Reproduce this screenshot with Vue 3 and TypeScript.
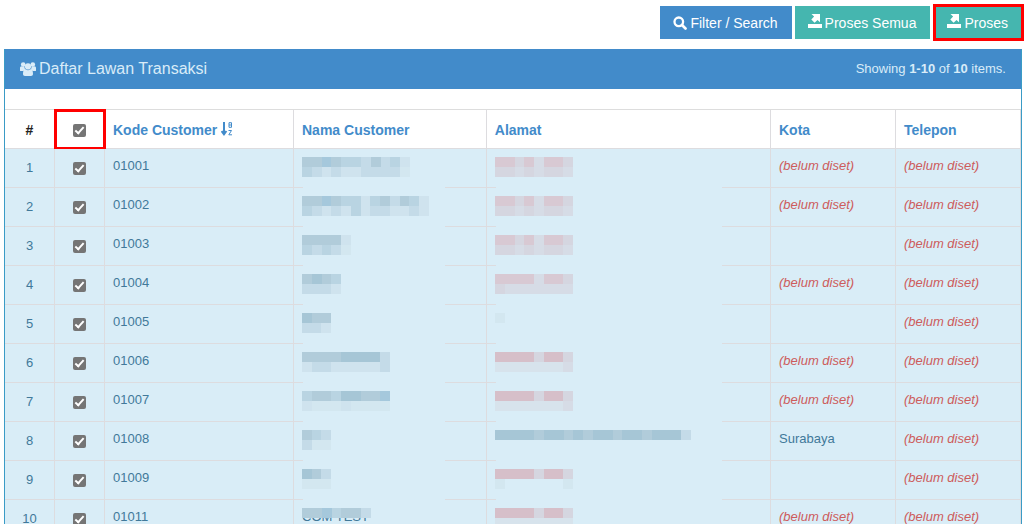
<script setup lang="ts">
interface Row {
  code: string
  name: string[]
  address: string[]
  label?: string
  city: string | null
}

const tones: Record<string, string> = {
  '.': 'transparent',
  a: '#a6c6d6',
  b: '#b1ccda',
  c: '#b9d4e2',
  d: '#c4dbe8',
  e: '#cfe3ee',
  f: '#d3e7f0',
  k: '#a5c8dc',
  p: '#d8c9d3',
  q: '#d6bfc9',
  r: '#d5d6e0',
  s: '#d6dce6',
  t: '#d7e3ec',
}

const unset = '(belum diset)'
const pinkSoft = ['pprpsppr', 'rrsrsrrs']
const pinkFade = ['qqqqrqqr', 'ttttttts']

const rows: Row[] = [
  { code: '01001', name: ['bbkbccdbdce', 'cdedeeddddf'], address: pinkSoft, city: unset },
  { code: '01002', name: ['bbkbccecbdbce', 'cdedeceddeede'], address: pinkSoft, city: unset },
  { code: '01003', name: ['bbbbe', 'cdcdf'], address: pinkSoft, city: null },
  { code: '01004', name: ['babc', 'ddde'], address: ['ppppsppr', 'rsssssss'], city: unset },
  { code: '01005', name: ['abb', 'dde'], address: ['f'], city: null },
  { code: '01006', name: ['bbbbaaaad', 'eddeeeeed'], address: pinkFade, city: unset },
  { code: '01007', name: ['cbbcaabbk', 'efffeffff'], address: pinkFade, city: unset },
  { code: '01008', name: ['bcd', 'dff'], address: ['aaaabaababaabaabaaad'], city: 'Surabaya' },
  { code: '01009', name: ['abd', 'fff'], address: ['qqqqrqqr', 'f......f'], city: null },
  { code: '01011', name: ['bbkcbbd'], address: ['qqqqrqqr', 'tttttttt'], label: 'COM TEST', city: unset },
]
</script>

<template>
  <main class="page">
    <div class="actions">
      <button type="button" class="btn blue">
        <svg class="search" viewBox="0 0 14 14" aria-hidden="true">
          <circle cx="5.8" cy="5.8" r="4.3" fill="none" stroke="currentColor" stroke-width="2.3" />
          <path d="M9 9l3.5 3.5" stroke="currentColor" stroke-width="2.7" stroke-linecap="round" />
        </svg>
        Filter / Search
      </button>
      <button v-for="text in ['Proses Semua', 'Proses']" :key="text" type="button" class="btn teal" :class="{ marked: text === 'Proses' }">
        <svg class="export" viewBox="0 0 14 14" aria-hidden="true">
          <path d="M3.500 0H12v8.300L9.500 5.900 6.600 8.800 3.300 5.600 6.100 2.600zM0 10h14v4H0z" fill="currentColor" />
        </svg>
        {{ text }}
      </button>
    </div>

    <section class="panel">
      <header class="heading">
        <h1>
          <svg class="users" viewBox="0 0 16 14" aria-hidden="true">
            <g fill="currentColor">
              <circle cx="3.200" cy="2.600" r="2.300" />
              <circle cx="12.800" cy="2.600" r="2.300" />
              <circle cx="8" cy="4.400" r="3.100" />
              <path d="M0 8.500V6.200c0-1.200.6-1.900 1.500-1.900.6.400 1.800.8 2.900.4 0 1.200.3 2 .9 2.700-.9 0-1.700.7-2.200 1.600H1C.4 9 0 9 0 8.500zM16 8.500V6.200c0-1.200-.6-1.900-1.500-1.900-.6.400-1.800.8-2.900.4 0 1.200-.3 2-.9 2.700.9 0 1.700.7 2.200 1.600H15c.6 0 1 0 1-.5zM3 12c0-2.700.7-4.700 2.500-4.700 1.400 1.200 3.600 1.200 5 0 1.800 0 2.500 2 2.500 4.700 0 1.300-.8 2-2 2H5c-1.200 0-2-.7-2-2z" />
            </g>
          </svg>
          Daftar Lawan Transaksi
        </h1>
        <div class="summary">Showing <b>1-10</b> of <b>10</b> items.</div>
      </header>

      <table>
        <colgroup>
          <col class="w-num" /><col class="w-check" /><col class="w-code" /><col class="w-name" />
          <col class="w-address" /><col class="w-city" /><col class="w-phone" />
        </colgroup>
        <thead>
          <tr>
            <th class="center">#</th>
            <th class="center check-all"><input type="checkbox" checked aria-label="Pilih semua" /></th>
            <th>
              <a href="#">Kode Customer
                <svg class="sort" viewBox="0 0 12 14" aria-hidden="true">
                  <path d="M3 0v11M.6 9L3 12.300 5.400 9" fill="none" stroke="currentColor" stroke-width="2" />
                  <path d="M8 .7h2.500v4.600H8zM8 3h2.500M7.500 8.500h3L7.800 12.800h3.200" fill="none" stroke="currentColor" stroke-width="1" />
                </svg>
              </a>
            </th>
            <th><a href="#">Nama Customer</a></th>
            <th><a href="#">Alamat</a></th>
            <th><a href="#">Kota</a></th>
            <th><a href="#">Telepon</a></th>
          </tr>
        </thead>
        <tbody>
          <tr v-for="(row, i) in rows" :key="row.code">
            <td class="center">{{ i + 1 }}</td>
            <td class="center"><input type="checkbox" checked :aria-label="'Pilih ' + row.code" /></td>
            <td>{{ row.code }}</td>
            <td v-for="(pattern, c) in [row.name, row.address]" :key="c" class="veiled" :class="c ? 'wide' : 'narrow'">
              <span v-if="!c && row.label" class="label">{{ row.label }}</span>
              <svg
                class="mosaic"
                :width="Math.round(pattern[0].length * 9.8)"
                :height="pattern.length * 10"
                :viewBox="`0 0 ${pattern[0].length} ${pattern.length}`"
                preserveAspectRatio="none"
                shape-rendering="crispEdges"
                aria-hidden="true"
              >
                <template v-for="(line, y) in pattern" :key="y">
                  <rect v-for="(tone, x) in line.split('')" :key="x" :x="x" :y="y" width="1" height="1" :fill="tones[tone]" />
                </template>
              </svg>
            </td>
            <td><i v-if="row.city === unset">{{ row.city }}</i><template v-else>{{ row.city }}</template></td>
            <td><i>{{ unset }}</i></td>
          </tr>
        </tbody>
      </table>
    </section>
  </main>
</template>

<style>
body {
  background: #fff;
  overflow: hidden;
}
</style>

<style scoped>
* {
  box-sizing: border-box;
}
.page {
  display: flex;
  flex-direction: column;
  height: 100vh;
  padding: 4px 2px 6px 4px;
  font-family: "Liberation Sans", Arial, sans-serif;
  font-size: 13px;
  line-height: 18px;
  color: #41799a;
}
.actions {
  display: flex;
  justify-content: flex-end;
  align-items: center;
  gap: 3px;
  margin-right: -2px;
  margin-bottom: 8px;
}
.btn {
  display: flex;
  align-items: center;
  gap: 3px;
  height: 33px;
  padding: 0 14px 0 13px;
  border: 0;
  color: #fff;
  font: 14px/20px "Liberation Sans", Arial, sans-serif;
  white-space: nowrap;
}
.blue {
  background: #428bca;
}
.teal {
  background: #45b6af;
}
.marked {
  height: 37px;
  border: 3px solid #f00;
  padding: 0 13px 0 11px;
}
.search,
.export {
  width: 14px;
  height: 14px;
}
.export {
  margin-bottom: 3px;
}
.panel {
  flex: 1;
  min-height: 0;
  overflow: hidden;
  border: solid #3a9bc6;
  border-width: 0 1px;
}
.heading {
  display: flex;
  justify-content: space-between;
  align-items: center;
  height: 40px;
  padding: 0 15px;
  background: #428bca;
  color: #d9ecf8;
  margin-bottom: 20px;
}
h1 {
  display: flex;
  align-items: center;
  gap: 3px;
  margin: 0;
  font-size: 16px;
  font-weight: 400;
}
.users {
  width: 16px;
  height: 14px;
}
table {
  width: 100%;
  table-layout: fixed;
  border-spacing: 0;
  border-top: 1px solid #ddd;
}
.w-num { width: 50px; }
.w-check { width: 50px; }
.w-code { width: 189px; }
.w-name { width: 19%; }
.w-address { width: 28%; }
.w-city { width: 125px; }
.w-phone { width: 125px; }
th,
td {
  height: 39px;
  padding: 8px;
  border: solid #dddcdf;
  border-width: 0 1px 1px 0;
  text-align: left;
}
th {
  padding-top: 10px;
  font-size: 14px;
  font-weight: 700;
  vertical-align: middle;
  color: #222;
  white-space: nowrap;
}
td {
  position: relative;
  vertical-align: top;
  background: #d9edf7;
}
a {
  color: #428bca;
  text-decoration: none;
}
.center {
  text-align: center;
  vertical-align: middle;
}
td.center {
  padding-top: 4px;
  padding-bottom: 4px;
}
.check-all {
  outline: 3px solid #f00;
  outline-offset: -2px;
}
input {
  appearance: none;
  display: block;
  width: 13px;
  height: 13px;
  margin: 0 auto;
  border-radius: 2px;
  background: #757575;
  position: relative;
}
input:checked::after {
  content: "";
  box-sizing: border-box;
  position: absolute;
  left: 4px;
  top: 1px;
  width: 5px;
  height: 9px;
  border: solid #fff;
  border-width: 0 2px 2px 0;
  transform: rotate(42deg);
}
.sort {
  width: 12px;
  height: 14px;
  vertical-align: -1px;
}
i {
  color: #cd5c5c;
}
.mosaic {
  display: block;
  position: relative;
}
.label {
  position: absolute;
  left: 8px;
  top: 8px;
}
.veiled::after {
  content: "";
  position: absolute;
  left: 9px;
  bottom: -1px;
  height: 1px;
  background: #d9edf7;
}
.narrow::after {
  width: 74%;
}
.wide::after {
  width: 80%;
}
</style>
